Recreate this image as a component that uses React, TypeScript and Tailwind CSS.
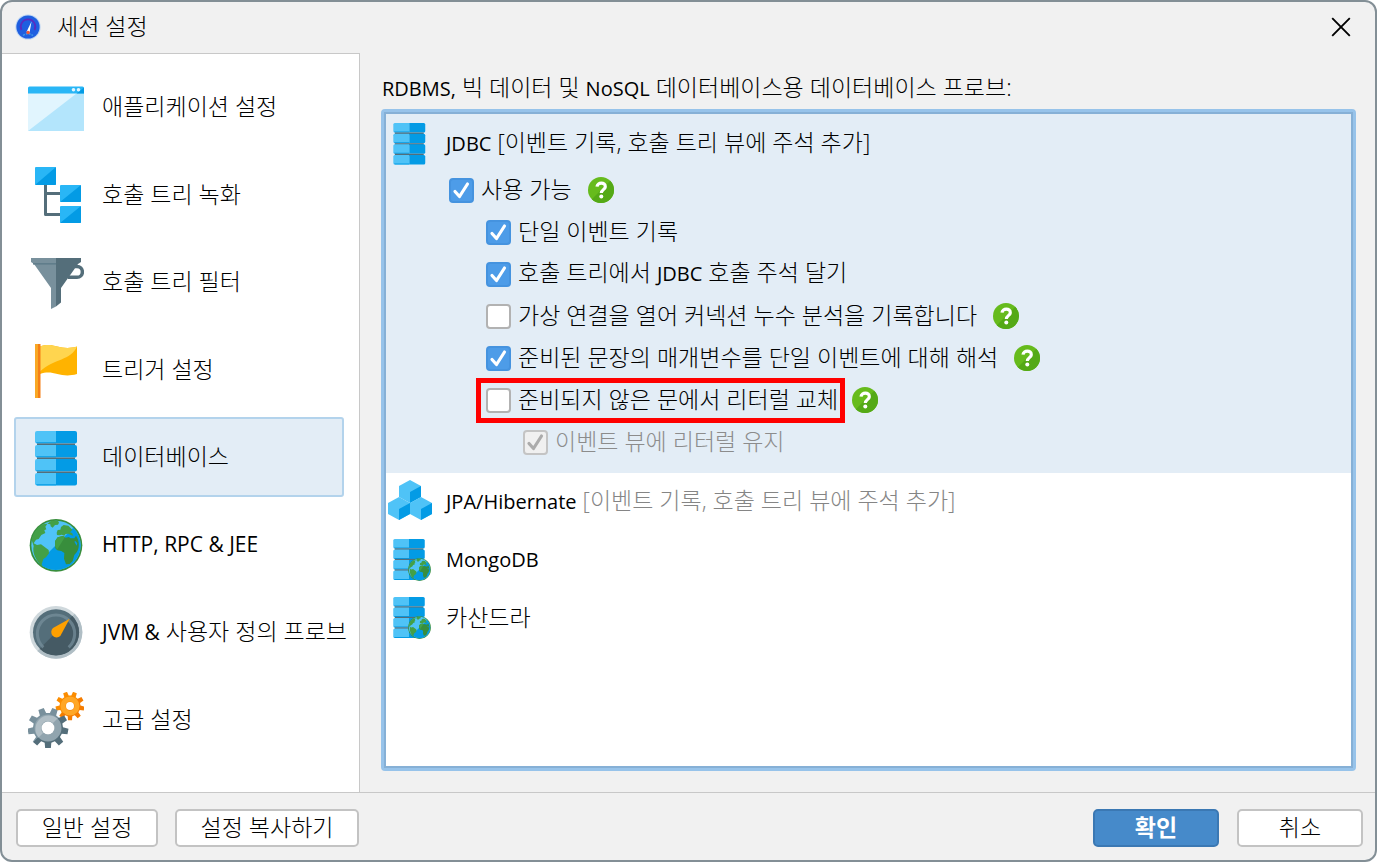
import { useState, type ReactNode } from "react";
import clsx from "clsx";

interface NavItem {
  id: string;
  label: ReactNode;
  icon: ReactNode;
}

interface Option {
  id: string;
  label: ReactNode;
  level: "root" | "child" | "leaf";
  checked: boolean;
  help?: boolean;
  disabled?: boolean;
  highlighted?: boolean;
}

function Latin({ large, children }: { large?: boolean; children: ReactNode }) {
  return <span className={clsx("font-normal", large ? "text-[21px]" : "text-[20px]")}>{children}</span>;
}

function AppLogo() {
  return (
    <svg viewBox="0 0 26 26" className="size-[26px]" aria-hidden="true">
      <circle cx="13" cy="13" r="12.6" fill="#b9d3f3" />
      <circle cx="13" cy="13" r="11.6" fill="#1f5fe0" />
      <path d="M6.500 16a7.300 7.300 0 1 1 13 0" fill="none" stroke="#5a2cc0" strokeWidth="1.800" />
      <path d="M11.500 18 16.500 7.500 14.600 18.500Z" fill="#fff" />
      <path d="M8 21.500q5-3.500 10 0" fill="none" stroke="#3f9be8" strokeWidth="1.500" strokeDasharray="2 1" />
      <circle cx="13.100" cy="18.500" r="1.800" fill="#f05a3c" />
    </svg>
  );
}

function WindowIcon() {
  return (
    <svg viewBox="0 -2 56 56" className="size-14" aria-hidden="true">
      <path d="M0 12.500h56V50H0z" fill="#b3e5fc" />
      <path d="M0 12.500h48.500L0 50z" fill="#e1f5fe" />
      <path d="M0 7a1.500 1.500 0 0 1 1.500-1.500h53A1.500 1.500 0 0 1 56 7v5.500H0z" fill="#29b6f6" />
      <path d="M48.500 12.500l7.500-6v6z" fill="#039be5" />
      <circle cx="45.500" cy="8.800" r="1.800" fill="#e1f5fe" />
      <circle cx="50.500" cy="8.800" r="1.800" fill="#e1f5fe" />
    </svg>
  );
}

function TreeIcon() {
  return (
    <svg viewBox="0 0 56 56" className="size-14" aria-hidden="true">
      <path d="M17.500 17v30.500H33M17.500 26.500H33" fill="none" stroke="#546e7a" strokeWidth="3" strokeLinejoin="round" />
      <rect x="7" y="0" width="21" height="18" rx="1" fill="#29b6f6" />
      <path d="M28 0v17a1 1 0 0 1-1 1H7z" fill="#039be5" />
      <rect x="32" y="18" width="21" height="17" rx="1" fill="#29b6f6" />
      <path d="M53 18v16a1 1 0 0 1-1 1H32z" fill="#039be5" />
      <rect x="32" y="39" width="21" height="17" rx="1" fill="#29b6f6" />
      <path d="M53 39v16a1 1 0 0 1-1 1H32z" fill="#039be5" />
    </svg>
  );
}

function FunnelIcon() {
  return (
    <svg viewBox="0 -1 56 56" className="size-14" aria-hidden="true">
      <path d="M47 11.500h2a5.400 5.400 0 0 1 0 10.800H40" fill="none" stroke="#546e7a" strokeWidth="3.500" />
      <path d="M3 3h25v48.500L23 54V33L6 9 3 7z" fill="#78909c" />
      <path d="M28 3h25v4l-3 2-17 24v14.500l-5 4z" fill="#546e7a" />
      <path d="M5 8.800h23" stroke="#607d8b" strokeWidth="1.600" />
    </svg>
  );
}

function FlagIcon() {
  return (
    <svg viewBox="0 -1 56 56" className="size-14" aria-hidden="true">
      <path d="M12 3.500c14-5 20 5 37 0V31c-17 5-23-5-37 0z" fill="#ffb300" />
      <path d="M12 3.500c14-5 20 5 37 0-6 14-23 12-37 25z" fill="#ffd54f" />
      <path d="M7 1h3v54H7z" fill="#f9a825" />
      <path d="M10 1h2.500v54H10z" fill="#f57f17" />
    </svg>
  );
}

function DatabaseShape() {
  return (
    <>
      {[0, 14, 28, 42].map((y) => (
        <g key={y}>
          {y > 0 && <path d={`M9 ${y - 1.500}h38v2.500H9z`} fill="#546e7a" />}
          <path d={`M7 ${y + 2}q0-2 2-2h19v12.500H9q-2 0-2-2z`} fill="#4fc3f7" />
          <path d={`M28 ${y}h19q2 0 2 2v8.500q0 2-2 2H28z`} fill="#039be5" />
          <path d={`M8 ${y + 11.300}h20v1.200H9z`} fill="#039be5" />
        </g>
      ))}
    </>
  );
}

function DatabaseIcon() {
  return (
    <svg viewBox="0 -2 56 56" className="size-14 overflow-visible" aria-hidden="true">
      <DatabaseShape />
    </svg>
  );
}

function GlobeShape() {
  return (
    <>
      <circle cx="80" cy="80" r="79" fill="#388e3c" />
      <circle cx="80" cy="80" r="74" fill="#4fc3f7" />
      <path d="M132 27A74 74 0 0 1 27 132z" fill="#039be5" />
      <path
        d="M7 64C11 44 24 26 40 17l14-2-6 9 3 8-6 3 3 8-12 6-8 12-8 2-7 11 10 5 12-2 23 17 1 10-9 12-8 5-5 16 5 12C20 125 8 104 13 82z"
        fill="#43a047"
      />
      <path d="M66 6h20l3 6-3 6-9 1-7 8-6-4-1-6-9-2z" fill="#43a047" />
      <path d="M82 42l3-8 8-1 2-8 8-6 14 2 12 12-7 8 6 2 4 8-8-2-7-4-8 1-4 5-8-3-7 2-7-1z" fill="#43a047" />
      <path d="M77 68l8-12 16-4 8 5 10-2 4 4h12l5-8c12 18 10 38 2 50l-7 8-5 18-9 9-11 1-6-17 1-17-9-6-12-2-6-6z" fill="#388e3c" />
      <path d="M77 68l8-12 16-4 6 3-24 38-5-10z" fill="#43a047" />
      <path d="M144 74l-6-7-3 2 7 12z" fill="#039be5" />
    </>
  );
}

function GlobeIcon() {
  return (
    <svg viewBox="-4 -5 168 168" className="size-14" aria-hidden="true">
      <GlobeShape />
    </svg>
  );
}

function GaugeIcon() {
  return (
    <svg viewBox="-4 -5 168 168" className="size-14" aria-hidden="true">
      <circle cx="80" cy="80" r="79" fill="#cfd8dc" />
      <path d="M136 24A79 79 0 0 1 24 136z" fill="#b0bec5" />
      <circle cx="80" cy="80" r="69" fill="#546e7a" />
      <path d="M129 31A69 69 0 0 1 31 129z" fill="#455a64" />
      <path d="M42 125A56 56 0 1 1 118 125" fill="none" stroke="#78909c" strokeWidth="9" opacity="0.700" />
      <path d="M121 39 93 91a16 16 0 1 1-22-24z" fill="#ffa000" />
    </svg>
  );
}

function gearPath(cx: number, cy: number, outer: number, inner: number, teeth: number) {
  const step = (Math.PI * 2) / teeth;
  const points: string[] = [];
  for (let i = 0; i < teeth; i++) {
    const a = i * step + Math.PI / 2;
    const corners: [number, number][] = [
      [-0.32, inner],
      [-0.2, outer],
      [0.2, outer],
      [0.32, inner],
    ];
    for (const [offset, radius] of corners) {
      const angle = a + offset * step;
      points.push(`${(cx + Math.cos(angle) * radius).toFixed(2)} ${(cy + Math.sin(angle) * radius).toFixed(2)}`);
    }
  }
  return `M${points.join("L")}Z`;
}

function GearsIcon() {
  return (
    <svg viewBox="0 0 56 56" className="size-14" aria-hidden="true">
      <defs>
        <linearGradient id="gear-grey" x1="0" y1="0" x2="1" y2="1">
          <stop offset="0.500" stopColor="#78909c" />
          <stop offset="0.500" stopColor="#546e7a" />
        </linearGradient>
        <linearGradient id="gear-orange" x1="0" y1="0" x2="1" y2="1">
          <stop offset="0.500" stopColor="#fb8c00" />
          <stop offset="0.500" stopColor="#f57c00" />
        </linearGradient>
      </defs>
      <path d={gearPath(42, 14, 14.5, 10.5, 9)} fill="url(#gear-orange)" />
      <circle cx="42" cy="14" r="7" fill="none" stroke="#ffa726" strokeWidth="5" />
      <circle cx="42" cy="14" r="4" fill="#fff" />
      <path d={gearPath(20, 36, 20.5, 15, 9)} fill="url(#gear-grey)" />
      <circle cx="20" cy="36" r="10" fill="none" stroke="#90a4ae" strokeWidth="7" />
      <path d="M10.500 45.500A13.500 13.500 0 0 1 29.500 26.500L25 31a7 7 0 0 0-10 10z" fill="#b0bec5" />
      <circle cx="20" cy="36" r="6.500" fill="#fff" />
    </svg>
  );
}

function ProbeDatabaseIcon() {
  return (
    <svg viewBox="0 0 44 44" className="size-11" aria-hidden="true">
      <g transform="translate(0 1) scale(0.760)">
        <DatabaseShape />
      </g>
    </svg>
  );
}

function RemoteDatabaseIcon() {
  return (
    <svg viewBox="0 0 44 44" className="size-11" aria-hidden="true">
      <g transform="translate(0 1) scale(0.750)">
        <DatabaseShape />
      </g>
      <g transform="translate(20 20) scale(0.144)">
        <GlobeShape />
      </g>
    </svg>
  );
}

function Cube({ x, y }: { x: number; y: number }) {
  return (
    <g transform={`translate(${x} ${y})`}>
      <path d="M11 0 22 6v11l-11 6L0 17V6z" fill="#4fc3f7" />
      <path d="M11 12 22 6v11l-11 6z" fill="#039be5" />
    </g>
  );
}

function CubesIcon() {
  return (
    <svg viewBox="0 1 44 44" className="size-11" aria-hidden="true">
      <Cube x={11} y={1} />
      <Cube x={0} y={18} />
      <Cube x={22} y={18} />
    </svg>
  );
}

function HelpButton() {
  return (
    <button type="button" aria-label="도움말" className="size-[26px] shrink-0 rounded-full">
      <svg viewBox="0 0 26 26" className="size-full" aria-hidden="true">
        <circle cx="13" cy="13" r="13" fill="#66bb1c" />
        <path d="M22.200 3.800A13 13 0 0 1 3.800 22.200z" fill="#54a916" />
        <path
          d="M9 9.600C9.300 4.900 17.600 5 17.300 9.800c-.2 2.800-4 3-4 6.200"
          fill="none"
          stroke="#fff"
          strokeWidth="3.200"
        />
        <circle cx="13.300" cy="19.400" r="2" fill="#fff" />
      </svg>
    </button>
  );
}

const NAV_ITEMS: NavItem[] = [
  { id: "application", label: "애플리케이션 설정", icon: <WindowIcon /> },
  { id: "recording", label: "호출 트리 녹화", icon: <TreeIcon /> },
  { id: "filters", label: "호출 트리 필터", icon: <FunnelIcon /> },
  { id: "triggers", label: "트리거 설정", icon: <FlagIcon /> },
  { id: "databases", label: "데이터베이스", icon: <DatabaseIcon /> },
  { id: "http", label: <Latin large>HTTP, RPC &amp; JEE</Latin>, icon: <GlobeIcon /> },
  {
    id: "jvm",
    label: (
      <>
        <Latin large>JVM &amp;</Latin> 사용자 정의 프로브
      </>
    ),
    icon: <GaugeIcon />,
  },
  { id: "advanced", label: "고급 설정", icon: <GearsIcon /> },
];

const OPTIONS: Option[] = [
  { id: "enabled", label: "사용 가능", level: "root", checked: true, help: true },
  { id: "single-events", label: "단일 이벤트 기록", level: "child", checked: true },
  {
    id: "annotate",
    label: (
      <>
        호출 트리에서 <Latin>JDBC</Latin> 호출 주석 달기
      </>
    ),
    level: "child",
    checked: true,
  },
  {
    id: "leaks",
    label: "가상 연결을 열어 커넥션 누수 분석을 기록합니다",
    level: "child",
    checked: false,
    help: true,
  },
  {
    id: "parameters",
    label: "준비된 문장의 매개변수를 단일 이벤트에 대해 해석",
    level: "child",
    checked: true,
    help: true,
  },
  {
    id: "literals",
    label: "준비되지 않은 문에서 리터럴 교체",
    level: "child",
    checked: false,
    help: true,
    highlighted: true,
  },
  { id: "retain", label: "이벤트 뷰에 리터럴 유지", level: "leaf", checked: true, disabled: true },
];

const LEVEL_PADDING = {
  root: "pl-[58px]",
  child: "pl-[95px]",
  leaf: "pl-[132px]",
};

function OptionRow({ option }: { option: Option }) {
  const [checked, setChecked] = useState(option.checked);

  return (
    <li
      className={clsx(
        "flex h-[42px] items-center",
        option.highlighted ? "gap-3" : "gap-[14px]",
        LEVEL_PADDING[option.level],
      )}
    >
      <label
        className={clsx(
          "flex h-[35px] items-center gap-[7px] pr-[2px] pl-[5px] whitespace-nowrap",
          option.highlighted && "outline-5 outline-[#ff0000]",
          option.disabled && "text-[#8c8c8c]",
        )}
      >
        <span className="grid size-[25px] shrink-0">
          <input
            type="checkbox"
            checked={checked}
            disabled={option.disabled}
            onChange={(event) => setChecked(event.target.checked)}
            className="peer col-start-1 row-start-1 size-[25px] appearance-none rounded-sm border-2 border-[#b2b2b2] bg-white checked:border-[#4593df] checked:bg-[#4d9ce8] disabled:border-[#c4c4c4] disabled:bg-[#f0f0f0]"
          />
          <svg
            viewBox="0 0 25 25"
            className="pointer-events-none col-start-1 row-start-1 size-[25px] text-white opacity-0 peer-checked:opacity-100 peer-disabled:text-[#ababab]"
            aria-hidden="true"
          >
            <path
              d="M6 13.500l4.500 5L18.500 6"
              fill="none"
              stroke="currentColor"
              strokeWidth="3.200"
              strokeLinecap="round"
              strokeLinejoin="round"
            />
          </svg>
        </span>
        <span className="pb-[2px]">{option.label}</span>
      </label>
      {option.help && <HelpButton />}
    </li>
  );
}

function ProbeRow({ icon, children }: { icon: ReactNode; children: ReactNode }) {
  return (
    <li className="flex h-[58px] items-center gap-[14px] whitespace-nowrap">
      {icon}
      <span className="pb-[2px]">{children}</span>
    </li>
  );
}

const BUTTON = "h-[38px] rounded-[5px] border-2 border-[#c3c3c3] bg-white pb-[2px] whitespace-nowrap";

export default function App() {
  const [active, setActive] = useState("databases");

  return (
    <div className="flex min-h-screen flex-col overflow-hidden rounded-xl border-2 border-[#838f96] bg-[#f1f1f1] font-['Open_Sans','Noto_Sans_CJK_KR',sans-serif] text-[23px] leading-[30px] font-light text-black">
      <header className="flex h-[51px] shrink-0 items-center justify-between pr-[23px] pb-[2px] pl-[13px]">
        <div className="flex items-center gap-4">
          <AppLogo />
          <h1 className="pb-[2px]">세션 설정</h1>
        </div>
        <button type="button" aria-label="닫기" className="p-px">
          <svg viewBox="0 0 20 20" className="size-5" aria-hidden="true">
            <path d="M1.200 1.200l17.600 17.600M18.800 1.200l-17.600 17.600" stroke="#000" strokeWidth="1.900" />
          </svg>
        </button>
      </header>

      <div className="flex grow">
        <nav className="flex w-[358px] shrink-0 flex-col justify-between gap-[7px] border-t border-r border-[#c8c8c8] bg-white pt-[13px] pr-[15px] pb-8 pl-3">
          {NAV_ITEMS.map((item) => (
            <button
              key={item.id}
              type="button"
              aria-current={active === item.id ? "page" : undefined}
              onClick={() => setActive(item.id)}
              className={clsx(
                "flex h-20 items-center gap-[18px] rounded-[3px] border-2 pl-3 text-left whitespace-nowrap",
                active === item.id ? "border-[#b3d3ec] bg-[#e3edf6]" : "border-transparent",
              )}
            >
              <span className="shrink-0">{item.icon}</span>
              <span className="pb-[2px]">{item.label}</span>
            </button>
          ))}
        </nav>

        <main className="flex min-w-0 grow flex-col pt-[19px] pr-[19px] pb-[21px] pl-[21px]">
          <h2 className="mb-[5px] pl-px whitespace-nowrap">
            <Latin>RDBMS,</Latin> 빅 데이터 및 <Latin>NoSQL</Latin> 데이터베이스용 데이터베이스 프로브:
          </h2>
          <div className="flex grow rounded-[4px] border-3 border-[#97c3ea]">
            <div className="grow border-2 border-[#86b0d6] bg-white">
              <section className="bg-[#e3edf6] pt-[5px] pb-[10px]">
                <h3 className="flex h-[50px] items-center gap-[14px] pl-[2px] whitespace-nowrap">
                  <ProbeDatabaseIcon />
                  <span className="pb-[2px]">
                    <Latin>JDBC</Latin> [이벤트 기록, 호출 트리 뷰에 주석 추가]
                  </span>
                </h3>
                <ul>
                  {OPTIONS.map((option) => (
                    <OptionRow key={option.id} option={option} />
                  ))}
                </ul>
              </section>
              <ul className="pl-[2px]">
                <ProbeRow icon={<CubesIcon />}>
                  <Latin>JPA/Hibernate</Latin>{" "}
                  <span className="text-[#858585]">[이벤트 기록, 호출 트리 뷰에 주석 추가]</span>
                </ProbeRow>
                <ProbeRow icon={<RemoteDatabaseIcon />}>
                  <Latin>MongoDB</Latin>
                </ProbeRow>
                <ProbeRow icon={<RemoteDatabaseIcon />}>카산드라</ProbeRow>
              </ul>
            </div>
          </div>
        </main>
      </div>

      <footer className="flex h-[68px] shrink-0 items-center justify-between border-t border-[#c8c8c8] pt-[3px] pr-3 pl-[14px]">
        <div className="flex gap-[17px]">
          <button type="button" className={clsx(BUTTON, "w-[142px]")}>
            일반 설정
          </button>
          <button type="button" className={clsx(BUTTON, "w-[184px]")}>
            설정 복사하기
          </button>
        </div>
        <div className="flex gap-[18px]">
          <button
            type="button"
            className="h-[38px] w-[126px] rounded-[5px] border-2 border-[#3b78b3] bg-[#468aca] pb-[2px] font-bold whitespace-nowrap text-white"
          >
            확인
          </button>
          <button type="button" className={clsx(BUTTON, "w-[126px]")}>
            취소
          </button>
        </div>
      </footer>
    </div>
  );
}
